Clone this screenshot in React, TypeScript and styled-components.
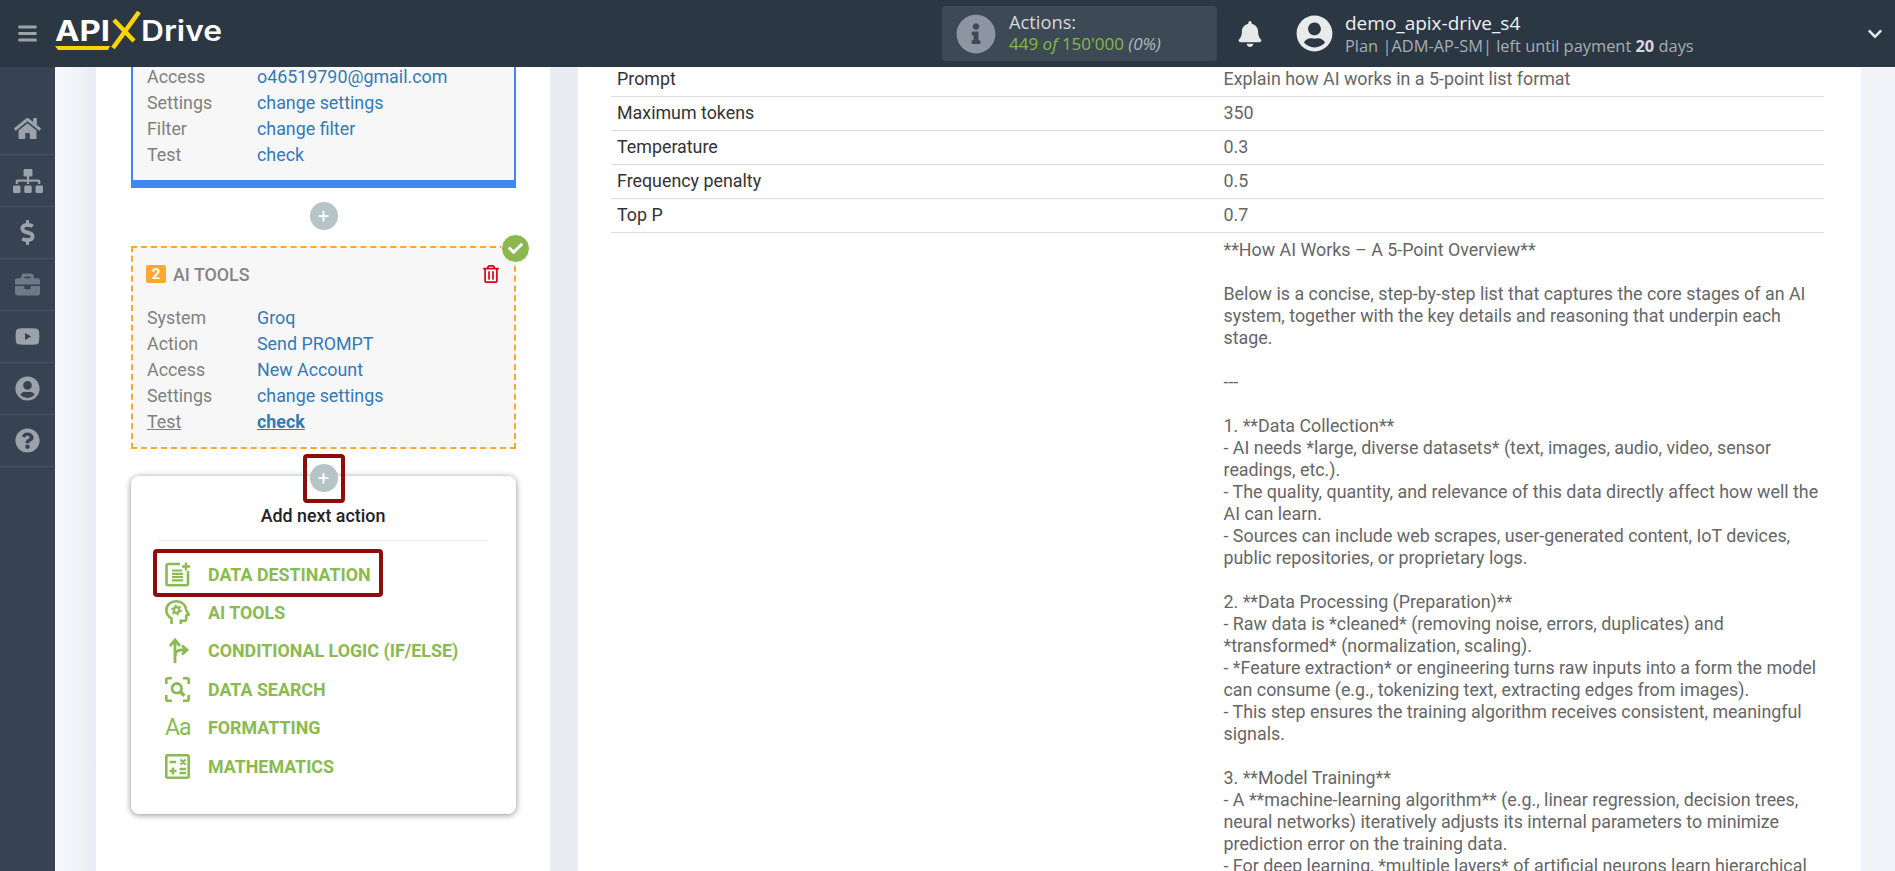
import React from 'react'
import styled, { createGlobalStyle } from 'styled-components'
import {
  FaBars,
  FaBell,
  FaBriefcase,
  FaCheck,
  FaChevronDown,
  FaDollarSign,
  FaHome,
  FaInfoCircle,
  FaQuestionCircle,
  FaRegTrashAlt,
  FaSitemap,
  FaUserCircle,
  FaYoutube,
} from 'react-icons/fa'

const GlobalStyle = createGlobalStyle`
  html, body {
    margin: 0;
    height: 100%;
    overflow: hidden;
    font-family: Roboto, "Liberation Sans", sans-serif;
    font-size: 17.85px;
  }
`

const Page = styled.div`
  display: flex;
  flex-direction: column;
  height: 100vh;
  overflow: hidden;
`

const Header = styled.header`
  display: flex;
  flex: 0 0 67px;
  align-items: center;
  position: relative;
  z-index: 2;
  background: #2c3744;
  color: #fff;
  font-family: 'Open Sans', sans-serif;
`

const MenuButton = styled.div`
  display: flex;
  width: 55px;
  justify-content: center;
  color: #9ca2a8;
  font-size: 21px;
`

const LogoMark = styled.svg`
  display: block;
  width: 170px;
  height: 44px;
  margin-top: -1px;
`

const ActionsBox = styled.div`
  display: flex;
  align-items: center;
  width: 275px;
  height: 55px;
  margin-left: 717px;
  padding-left: 14px;
  box-sizing: border-box;
  border-radius: 4px;
  background: #3d4a55;
  color: #8b96a0;
  font-size: 40px;
`

const ActionsText = styled.div`
  margin: -3px 0 0 13px;
`

const ActionsTitle = styled.div`
  color: #d5d9dc;
  font-size: 18.3px;
  line-height: 23px;
`

const ActionsCount = styled.div`
  color: #b0b8be;
  font-size: 17px;
  line-height: 22px;
  font-style: italic;
`

const Green = styled.span`
  color: #85b84e;
  font-style: normal;
`

const GreenItalic = styled.em`
  color: #85b84e;
`

const BellWrap = styled.div`
  display: flex;
  margin-left: 20px;
  color: #e6e8ea;
  font-size: 26px;
`

const AvatarWrap = styled.div`
  display: flex;
  margin-left: 33px;
  color: #e9eaec;
  font-size: 37px;
`

const UserInfo = styled.div`
  margin-left: 12px;
`

const UserName = styled.div`
  color: #f0f1f2;
  font-size: 19px;
  line-height: 24px;
`

const UserPlan = styled.div`
  color: #a7aeb5;
  font-size: 16.4px;
  line-height: 21px;
`

const PlanDays = styled.b`
  color: #d6d9dc;
`

const Chevron = styled.div`
  display: flex;
  margin-left: auto;
  margin-right: 12px;
  color: #e6e8ea;
  font-size: 16px;
`

const Body = styled.div`
  display: flex;
  flex: 1;
  min-height: 0;
`

const Sidebar = styled.nav`
  flex: 0 0 55px;
  padding-top: 36px;
  background: #374352;
`

const SideItem = styled.div<{ $dim?: boolean; $size?: number }>`
  display: flex;
  height: 51px;
  align-items: center;
  justify-content: center;
  border-bottom: 1px solid #4a5564;
  color: ${props => (props.$dim ? '#6f7a87' : '#9ba2aa')};
  font-size: ${props => props.$size || 25}px;
`

const Main = styled.main`
  display: flex;
  flex: 1;
  min-width: 0;
  gap: 28px;
  padding-left: 41px;
  overflow: hidden;
  background: linear-gradient(90deg, #f7f9fd 0, #e9edf3 41px, #e9edf3 520px, #f1f3f9 100%);
`

const LeftPanel = styled.section`
  flex: 0 0 385px;
  padding: 0 34px 0 35px;
  background: #fff;
`

const Scrolled = styled.div<{ $by: number }>`
  margin-top: -${props => props.$by}px;
`

const SourceCard = styled.div`
  padding: 0 14px 12px;
  border: 2px solid #4087f2;
  border-top: 0;
  border-bottom-width: 8px;
  background: #f7f7f7;
`

const ToolCard = styled.div`
  position: relative;
  padding: 17px 14px 12px;
  border: 2px dashed #ffa733;
  background: #f7f7f7;
`

const DoneBadge = styled.div`
  position: absolute;
  top: -14px;
  right: -16px;
  display: flex;
  width: 27px;
  height: 27px;
  align-items: center;
  justify-content: center;
  border: 1px solid #fff;
  border-radius: 50%;
  background: #8ab84f;
  color: #fff;
  font-size: 15px;
`

const CardTitle = styled.div`
  display: flex;
  height: 18px;
  align-items: center;
  margin-bottom: 22px;
  color: #858585;
  font-weight: 500;
`

const StepNumber = styled.span`
  display: flex;
  width: 20px;
  height: 18px;
  align-items: center;
  justify-content: center;
  margin: 0 7px 0 -1px;
  border-radius: 2px;
  background: #ffa733;
  color: #fff;
  font-size: 15px;
  font-weight: 700;
`

const TrashButton = styled.span`
  display: flex;
  margin-left: auto;
  color: #d9001b;
  font-size: 18px;
`

const InfoRow = styled.div`
  display: flex;
  height: 26px;
  padding-bottom: 1px;
  box-sizing: border-box;
  align-items: center;
`

const InfoLabel = styled.span<{ $active?: boolean }>`
  flex: 0 0 110px;
  color: #808080;
  span {
    text-decoration: ${props => (props.$active ? 'underline' : 'none')};
  }
`

const InfoValue = styled.a<{ $active?: boolean }>`
  color: #337ab7;
  font-weight: ${props => (props.$active ? 700 : 400)};
  text-decoration: ${props => (props.$active ? 'underline' : 'none')};
`

const PlusButton = styled.div<{ $marked?: boolean }>`
  position: relative;
  z-index: 1;
  display: flex;
  width: 28px;
  height: 28px;
  align-items: center;
  justify-content: center;
  margin: 14px auto 16px;
  border-radius: 50%;
  background: #b5c4c6;
  color: #fff;
  font-size: 20px;
  line-height: 1;
  ${props =>
    props.$marked &&
    `
    margin: 15px auto 0;
    &::after {
      content: '';
      position: absolute;
      inset: -10px -7px -11px -7px;
      border: 4px solid #8b0d0d;
      border-radius: 4px;
    }
  `}
`

const NextPopup = styled.div`
  margin-top: -16px;
  padding: 28px 28px 29px 27px;
  border-radius: 8px;
  background: #fff;
  box-shadow: 0 1px 6px rgba(0, 0, 0, 0.45);
`

const PopupTitle = styled.div`
  padding-bottom: 12px;
  margin-bottom: 14px;
  border-bottom: 1px solid #eee;
  color: #222;
  font-weight: 500;
  line-height: 24px;
  text-align: center;
`

const ActionRow = styled.div<{ $marked?: boolean }>`
  position: relative;
  display: flex;
  height: 38.4px;
  align-items: center;
  padding-left: 7px;
  color: #8aba50;
  font-weight: 700;
  ${props =>
    props.$marked &&
    `
    &::after {
      content: '';
      position: absolute;
      left: -5px;
      top: -6px;
      width: 230px;
      height: 48px;
      box-sizing: border-box;
      border: 4px solid #8b0d0d;
      border-radius: 4px;
    }
  `}
`

const ActionIcon = styled.svg`
  flex: 0 0 25px;
  width: 25px;
  height: 25px;
  margin-right: 18px;
  fill: none;
  stroke: #8aba50;
  stroke-width: 2.6;
`

const AaIcon = styled.span`
  flex: 0 0 25px;
  min-width: 0;
  margin-right: 18px;
  font-size: 23px;
  font-weight: 400;
  letter-spacing: -1px;
  white-space: nowrap;
`

const RightPanel = styled.section`
  flex: 0 0 1283px;
  padding: 0 36px 0 33px;
  box-sizing: border-box;
  overflow: hidden;
  background: #fff;
`

const ParamTable = styled.table`
  width: 1213px;
  border-collapse: collapse;
  table-layout: fixed;
`

const ParamCell = styled.td`
  padding: 5px 6px 7px;
  height: 21px;
  border-bottom: 1px solid #ddd;
  color: #666;
  line-height: 21px;
  vertical-align: top;
`

const ParamName = styled(ParamCell)`
  color: #333;
`

const ResultCell = styled.td`
  padding: 6px 2px 2px 6px;
  color: #666;
  line-height: 22px;
  white-space: pre-wrap;
  vertical-align: top;
`

const params = [
  ['Prompt', 'Explain how AI works in a 5-point list format'],
  ['Maximum tokens', '350'],
  ['Temperature', '0.3'],
  ['Frequency penalty', '0.5'],
  ['Top P', '0.7'],
]

const resultText = `**How AI Works – A 5-Point Overview**

Below is a concise, step-by-step list that captures the core stages of an AI system, together with the key details and reasoning that underpin each stage.

---

1. **Data Collection**
- AI needs *large, diverse datasets* (text, images, audio, video, sensor readings, etc.).
- The quality, quantity, and relevance of this data directly affect how well the AI can learn.
- Sources can include web scrapes, user-generated content, IoT devices, public repositories, or proprietary logs.

2. **Data Processing (Preparation)**
- Raw data is *cleaned* (removing noise, errors, duplicates) and *transformed* (normalization, scaling).
- *Feature extraction* or engineering turns raw inputs into a form the model can consume (e.g., tokenizing text, extracting edges from images).
- This step ensures the training algorithm receives consistent, meaningful signals.

3. **Model Training**
- A **machine-learning algorithm** (e.g., linear regression, decision trees, neural networks) iteratively adjusts its internal parameters to minimize prediction error on the training data.
- For deep learning, *multiple layers* of artificial neurons learn hierarchical`

const Logo = () => (
  <LogoMark viewBox="0 0 170 44">
    <text
      x="0"
      y="30"
      fill="#fff"
      fontFamily="Inter, sans-serif"
      fontSize="28"
      fontWeight="700"
      textLength="55"
      lengthAdjust="spacingAndGlyphs"
    >
      API
    </text>
    <text
      x="86"
      y="30"
      fill="#fff"
      fontFamily="Inter, sans-serif"
      fontSize="28"
      fontWeight="600"
      textLength="81"
      lengthAdjust="spacingAndGlyphs"
    >
      Drive
    </text>
    <path d="M0 35h55l-2 4H3z" fill="#ffd500" />
    <path d="M59 9l20 21M84 1L58 37" stroke="#ffd500" strokeWidth="4.5" fill="none" />
  </LogoMark>
)

const DestinationIcon = () => (
  <ActionIcon viewBox="0 0 25 25">
    <path d="M15 2H3.2C2.2 2 1.500 2.700 1.500 3.700v17.800c0 1 .7 1.700 1.700 1.700h18.100c1 0 1.700-.7 1.700-1.700V9" />
    <path d="M7 8.500h10M7 11.800h11M7 15h11M7 18.300h11" strokeWidth="2.200" />
    <path d="M21 .5v8M17 4.500h8" strokeWidth="2.400" />
  </ActionIcon>
)

const HeadIcon = () => (
  <ActionIcon viewBox="0 0 25 25">
    <path d="M6.500 24v-5.500C3.200 16.500 1.300 13.300 1.300 10 1.300 5 5.800 1.300 11.300 1.300c5.600 0 9.700 3.900 9.900 8.700l2.500 4.600-2.500 1v3.300c0 1.100-.8 1.800-1.800 1.800h-3.600V24" />
    <circle cx="11.500" cy="10" r="2.800" strokeWidth="2.200" />
    <circle cx="11.500" cy="10" r="4.700" strokeWidth="1.600" strokeDasharray="2.100 2.800" />
  </ActionIcon>
)

const BranchIcon = () => (
  <ActionIcon viewBox="0 0 25 25">
    <path d="M10 3v22M5 8l5-6 5 6" strokeWidth="2.800" />
    <path d="M10 18c0-4 3-6 6-6h5M17 7.500l5 4.500-5 4.500" strokeWidth="2.800" />
  </ActionIcon>
)

const SearchIcon = () => (
  <ActionIcon viewBox="0 0 25 25">
    <path d="M1.300 7V2.800c0-.8.700-1.500 1.500-1.500H7M18 1.300h4.200c.8 0 1.500.7 1.500 1.500V7M23.700 18v4.200c0 .8-.7 1.500-1.500 1.500H18M7 23.700H2.800c-.8 0-1.500-.7-1.500-1.500V18" />
    <circle cx="11.800" cy="11.300" r="4.800" strokeWidth="2.800" />
    <path d="M15.300 14.800l4 4" strokeWidth="3.400" />
  </ActionIcon>
)

const MathIcon = () => (
  <ActionIcon viewBox="0 0 25 25">
    <rect x="1.300" y="1.300" width="22.400" height="22.400" rx="1.500" />
    <path d="M4.500 8h6.500M15.500 5.500l5 5M20.500 5.500l-5 5M4.500 17h7M8 13.500v7M14.500 15h6.500M14.500 19h6.500" strokeWidth="2.400" />
  </ActionIcon>
)

const App = () => (
  <Page>
    <GlobalStyle />
    <Header>
      <MenuButton>
        <FaBars />
      </MenuButton>
      <Logo />
      <ActionsBox>
        <FaInfoCircle />
        <ActionsText>
          <ActionsTitle>Actions:</ActionsTitle>
          <ActionsCount>
            <Green>449</Green> <GreenItalic>of</GreenItalic> <Green>150'000</Green> (0%)
          </ActionsCount>
        </ActionsText>
      </ActionsBox>
      <BellWrap>
        <FaBell />
      </BellWrap>
      <AvatarWrap>
        <FaUserCircle />
      </AvatarWrap>
      <UserInfo>
        <UserName>demo_apix-drive_s4</UserName>
        <UserPlan>
          Plan |ADM-AP-SM| left until payment <PlanDays>20</PlanDays> days
        </UserPlan>
      </UserInfo>
      <Chevron>
        <FaChevronDown />
      </Chevron>
    </Header>
    <Body>
      <Sidebar>
        <SideItem $size={27}>
          <FaHome />
        </SideItem>
        <SideItem $size={30}>
          <FaSitemap />
        </SideItem>
        <SideItem>
          <FaDollarSign />
        </SideItem>
        <SideItem $dim>
          <FaBriefcase />
        </SideItem>
        <SideItem>
          <FaYoutube />
        </SideItem>
        <SideItem>
          <FaUserCircle />
        </SideItem>
        <SideItem>
          <FaQuestionCircle />
        </SideItem>
      </Sidebar>
      <Main>
        <LeftPanel>
          <Scrolled $by={3}>
            <SourceCard>
              <InfoRow>
                <InfoLabel>Access</InfoLabel>
                <InfoValue>o46519790@gmail.com</InfoValue>
              </InfoRow>
              <InfoRow>
                <InfoLabel>Settings</InfoLabel>
                <InfoValue>change settings</InfoValue>
              </InfoRow>
              <InfoRow>
                <InfoLabel>Filter</InfoLabel>
                <InfoValue>change filter</InfoValue>
              </InfoRow>
              <InfoRow>
                <InfoLabel>Test</InfoLabel>
                <InfoValue>check</InfoValue>
              </InfoRow>
            </SourceCard>
            <PlusButton>+</PlusButton>
            <ToolCard>
              <DoneBadge>
                <FaCheck />
              </DoneBadge>
              <CardTitle>
                <StepNumber>2</StepNumber>
                AI TOOLS
                <TrashButton>
                  <FaRegTrashAlt />
                </TrashButton>
              </CardTitle>
              <InfoRow>
                <InfoLabel>System</InfoLabel>
                <InfoValue>Groq</InfoValue>
              </InfoRow>
              <InfoRow>
                <InfoLabel>Action</InfoLabel>
                <InfoValue>Send PROMPT</InfoValue>
              </InfoRow>
              <InfoRow>
                <InfoLabel>Access</InfoLabel>
                <InfoValue>New Account</InfoValue>
              </InfoRow>
              <InfoRow>
                <InfoLabel>Settings</InfoLabel>
                <InfoValue>change settings</InfoValue>
              </InfoRow>
              <InfoRow>
                <InfoLabel $active>
                  <span>Test</span>
                </InfoLabel>
                <InfoValue $active>check</InfoValue>
              </InfoRow>
            </ToolCard>
            <PlusButton $marked>+</PlusButton>
            <NextPopup>
              <PopupTitle>Add next action</PopupTitle>
              <ActionRow $marked>
                <DestinationIcon />
                DATA DESTINATION
              </ActionRow>
              <ActionRow>
                <HeadIcon />
                AI TOOLS
              </ActionRow>
              <ActionRow>
                <BranchIcon />
                CONDITIONAL LOGIC (IF/ELSE)
              </ActionRow>
              <ActionRow>
                <SearchIcon />
                DATA SEARCH
              </ActionRow>
              <ActionRow>
                <AaIcon>Aa</AaIcon>
                FORMATTING
              </ActionRow>
              <ActionRow>
                <MathIcon />
                MATHEMATICS
              </ActionRow>
            </NextPopup>
          </Scrolled>
        </LeftPanel>
        <RightPanel>
          <Scrolled $by={4}>
            <ParamTable>
              <tbody>
                {params.map(([name, value]) => (
                  <tr key={name}>
                    <ParamName>{name}</ParamName>
                    <ParamCell>{value}</ParamCell>
                  </tr>
                ))}
                <tr>
                  <td />
                  <ResultCell>{resultText}</ResultCell>
                </tr>
              </tbody>
            </ParamTable>
          </Scrolled>
        </RightPanel>
      </Main>
    </Body>
  </Page>
)

export default App
